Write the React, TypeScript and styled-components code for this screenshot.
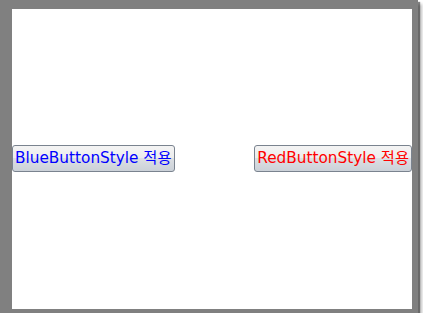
import React from 'react';
import styled, { createGlobalStyle } from 'styled-components';

const GlobalStyle = createGlobalStyle`
  html, body {
    margin: 0;
    padding: 0;
    background: #FFFFFF;
  }
`;

export default function App() {
  return (
    <>
      <GlobalStyle />
      <Frame>
        <Canvas>
          <StyledButton $tone="blue">BlueButtonStyle 적용</StyledButton>
          <StyledButton $tone="red">RedButtonStyle 적용</StyledButton>
        </Canvas>
      </Frame>
    </>
  );
}

/* ─── STYLED COMPONENTS ─── */
const Frame = styled.div`
  width: 418px;
  height: 313px;
  box-sizing: border-box;
  padding: 9px 6px 4px 12px;
  background: #808080;
  box-shadow: 2px 2px 1px rgba(0, 0, 0, 0.45), 4px 4px 3px rgba(0, 0, 0, 0.25);
  display: flex;
`;

const Canvas = styled.div`
  flex: 1;
  background: #FFFFFF;
  display: flex;
  justify-content: space-between;
  align-items: center;
  padding-bottom: 1px;
`;

const StyledButton = styled.button<{ $tone: 'blue' | 'red' }>`
  height: 27px;
  box-sizing: border-box;
  margin: 0;
  padding: 0 2px;
  border: 1px solid #7a838f;
  border-radius: 3px;
  background: linear-gradient(#f4f4f4 0%, #ececec 50%, #dcdfe3 50%, #cbd1d8 100%);
  color: ${p => (p.$tone === 'blue' ? '#0000FF' : '#FF0000')};
  font-family: 'DejaVu Sans', 'Noto Sans CJK KR', sans-serif;
  font-size: 15.3px;
  line-height: 1;
  white-space: nowrap;
  cursor: pointer;
`;
